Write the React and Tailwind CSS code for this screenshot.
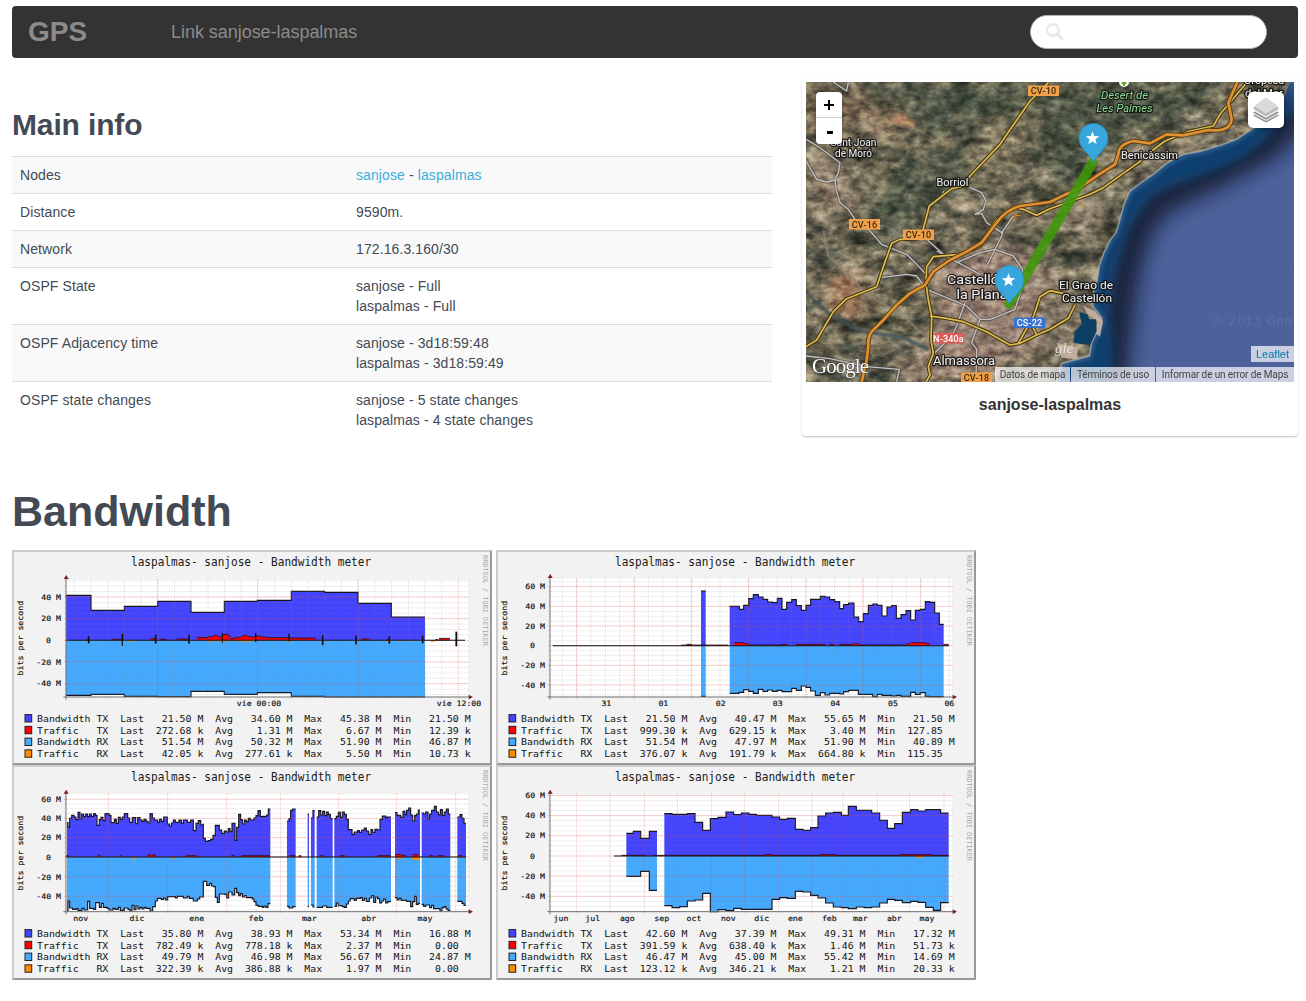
import React from "react";

const MONO = "font-['DejaVu_Sans_Mono',monospace]";

/* ---------- RRD charts: plot units are thirds of a pixel ---------- */

function stepPath(run) {
  const end = run[run.length - 1];
  let d = "";
  for (let i = 0; i < run.length - 1; i += 2) {
    const [x, y] = [run[i], run[i + 1]];
    const next = i + 2 < run.length - 1 ? run[i + 2] : end;
    d += (i === 0 ? "M" : "L") + x + " " + y + "H" + next;
  }
  return d;
}

function Area({ runs, zero, color, stroke = 3.4 }) {
  return runs.map((run, i) => {
    const line = stepPath(run);
    return (
      <g key={i}>
        <path d={`${line}V${zero}H${run[0]}Z`} fill={color} />
        <path d={line} fill="none" stroke="#15151f" strokeWidth={stroke} />
      </g>
    );
  });
}

const COLORS = ["#4444ff", "#ff0000", "#44aaff", "#ff8c00"];
const NAMES = ["Bandwidth TX", "Traffic   TX", "Bandwidth RX", "Traffic   RX"];

function legendLine(i, v) {
  const cell = (k, s) => {
    const [n, u = " "] = s.split(" ");
    return k + n.padStart(8) + " " + u;
  };
  return [
    NAMES[i],
    cell("Last", v[0]),
    cell("Avg", v[1]),
    cell("Max", v[2]),
    cell("Min", v[3]),
  ].join("  ");
}

function Chart({ c }) {
  const top = c.top;
  const bottom = c.bottom;
  const minorsY = [];
  for (let y = c.zero; y > top; y -= c.step / 4) minorsY.push(y);
  for (let y = c.zero + c.step / 4; y < bottom; y += c.step / 4) minorsY.push(y);
  const dy = c.dy;
  return (
    <div className="h-[215px] w-[480px] border-2 border-t-[#cccccc] border-l-[#cccccc] border-r-[#999999] border-b-[#999999] bg-[#f2f2f2]">
      <svg viewBox="2 2 476 211" className={`block h-[211px] w-[476px] ${MONO}`}>
        <g transform={`translate(-2 ${dy}) scale(0.33333)`}>
          <rect x="168" y={top} width="1206" height={bottom - top} fill="#fff" />
          <Area runs={c.tx} zero={c.zero} color="#4444ff" />
          <Area runs={c.rx} zero={c.zero} color="#44aaff" />
          <g stroke="#8a8a8a" strokeOpacity="0.28" strokeWidth="2.4" strokeDasharray="5 3">
            {minorsY.map((y) => (
              <path key={y} d={`M163 ${y}H1376`} />
            ))}
            {c.minorX.map((x) => (
              <path key={x} d={`M${x} ${top}V${bottom + 5}`} />
            ))}
          </g>
          <g stroke="#e04848" strokeOpacity="0.27" strokeWidth="3" strokeDasharray="4 2">
            {c.yl.map(([, y]) => (
              <path key={y} d={`M162 ${y}H1376`} />
            ))}
            {c.majorX.map((x) => (
              <path key={x} d={`M${x} ${top - 3}V${bottom + 7}`} />
            ))}
          </g>
          {c.traffic.map(([x, w, up, down], i) => (
            <g key={i}>
              {up > 0 && <rect x={x} y={c.zero - up} width={w} height={up} fill="#ff0000" />}
              {down > 0 && <rect x={x} y={c.zero} width={w} height={down} fill="#ff8c00" />}
              {up > 0 && <path d={`M${x} ${c.zero - up}h${w}`} stroke="#111" strokeWidth="2.2" />}
            </g>
          ))}
          {(c.ticks || []).map(([x, w, up, down]) => (
            <rect key={x} x={x - w / 2} y={c.zero - up} width={w} height={up + down} fill="#111" />
          ))}
          {c.base.map(([a, b], i) => (
            <path key={i} d={`M${a} ${c.zero}H${b}`} stroke="#111" strokeWidth="3.2" />
          ))}
          <path d={`M168 ${top - 8}V${bottom + 8}M160 ${bottom}H1382`} stroke="#707070" strokeWidth="3" />
          <path d={`M161 ${top - 2}L168.500 ${top - 14}L176 ${top - 2}Z`} fill="#801c1c" />
          <path d={`M1376 ${bottom - 7}L1389 ${bottom}L1376 ${bottom + 7}Z`} fill="#801c1c" />
        </g>
        <text transform="translate(119 16) scale(0.949 1)" fontSize="11.700" textLength="253" fill="#1a1a1a">
          laspalmas- sanjose - Bandwidth meter
        </text>
        <text transform="translate(11.200 125.500) rotate(-90) scale(1.1 1)" fontSize="7.500" textLength="68" fill="#111" stroke="#111" strokeWidth="0.150">
          bits per second
        </text>
        <text transform="translate(470.800 5) rotate(90)" fontSize="6.900" textLength="91" fill="#a8a8a8">
          RRDTOOL / TOBI OETIKER
        </text>
        <g fontSize="7.400" fill="#111" stroke="#111" strokeWidth="0.160">
          {c.yl.map(([t, y]) => (
            <text key={t} transform={`translate(${t === "0" ? 39 : 49} ${y / 3 + dy + 2.6}) scale(1.112 1)`} textAnchor="end">
              {t}
            </text>
          ))}
          {c.xl.map(([t, x]) => (
            <text key={t} transform={`translate(${x / 3 - 2} 156) scale(1.112 1)`} textAnchor="middle">
              {t}
            </text>
          ))}
        </g>
        {c.legend.map((v, i) => (
          <g key={i}>
            <rect x="13" y={164.600 + i * 11.750} width="6.700" height="7.400" fill={COLORS[i]} stroke="#222" strokeWidth="1" />
            <text transform={`translate(25 ${171.800 + i * 11.750}) scale(1.09 1)`} fontSize="9.060" fill="#111" style={{ whiteSpace: "pre" }}>
              {legendLine(i, v)}
            </text>
          </g>
        ))}
      </svg>
    </div>
  );
}

const range = (a, b, s) => {
  const r = [];
  for (let x = a; x <= b; x += s) r.push(x);
  return r;
};

const CHARTS = [
  {
    dy: -4, top: 101, bottom: 453, zero: 283, step: 65,
    yl: [["40 M", 153], ["20 M", 218], ["0", 283], ["-20 M", 348], ["-40 M", 413]],
    xl: [["vie 00:00", 747], ["vie 12:00", 1347]],
    majorX: [443, 743, 1044, 1345],
    minorX: range(193, 1300, 50.1),
    tx: [[168, 148, 243, 193, 343, 181, 443, 166, 543, 199, 643, 166, 742, 163, 844, 136, 944, 139, 1044, 172, 1144, 213, 1245]],
    rx: [[168, 448, 243, 445, 343, 451, 443, 452, 543, 436, 643, 445, 742, 440, 844, 451, 944, 453, 1245]],
    base: [[168, 1365]],
    traffic: [
      [230, 8, 2, 7], [334, 8, 17, 13], [360, 8, 0, 5], [305, 30, 3, 0], [422, 18, 5, 0], [450, 20, 3, 0], [500, 34, 4, 0],
      [561, 14, 9, 0], [575, 20, 8, 0], [595, 17, 11, 4], [612, 10, 15, 0], [622, 13, 11, 4], [635, 7, 17, 8], [642, 13, 18, 3],
      [655, 7, 13, 4], [662, 12, 6, 0], [674, 20, 9, 3], [694, 8, 13, 4], [702, 10, 15, 4], [712, 16, 11, 4], [728, 10, 10, 2],
      [738, 14, 13, 0], [752, 18, 10, 0], [770, 72, 8, 0], [842, 75, 7, 0], [830, 8, 0, 6], [1055, 22, 4, 0], [1130, 8, 2, 6],
      [1162, 12, 0, 3], [1198, 10, 0, 3], [1262, 12, 0, 4], [1275, 10, 2, 2], [1287, 33, 6, 0],
    ],
    ticks: [
      [236, 5, 13, 9], [337, 4, 18, 16], [437, 5, 17, 10], [537, 5, 17, 10], [637, 3, 22, 8], [737, 4, 22, 5], [837, 4, 20, 3],
      [938, 5, 15, 14], [1038, 5, 15, 12], [1138, 5, 13, 10], [1238, 5, 14, 9], [1339, 5.5, 26, 18],
    ],
    legend: [
      ["21.50 M", "34.60 M", "45.38 M", "21.50 M"],
      ["272.68 k", "1.31 M", "6.67 M", "12.39 k"],
      ["51.54 M", "50.32 M", "51.90 M", "46.87 M"],
      ["42.05 k", "277.61 k", "5.50 M", "10.73 k"],
    ],
  },
  {
    dy: -4, top: 98, bottom: 453, zero: 299, step: 59,
    yl: [["60 M", 122], ["40 M", 181], ["20 M", 240], ["0", 299], ["-20 M", 358], ["-40 M", 417]],
    xl: [["31", 337], ["01", 508], ["02", 680], ["03", 851], ["04", 1024], ["05", 1197], ["06", 1366]],
    majorX: [248, 421, 593, 764, 936, 1106, 1280],
    minorX: range(205, 1370, 43),
    tx: [
      [621, 135, 635],
      [707, 181, 736, 190, 749, 178, 764, 158, 778, 146, 793, 153, 807, 160, 821, 168, 835, 170, 850, 157, 864, 190, 878, 169, 893, 161, 907, 179, 922, 193, 936, 178, 950, 160, 979, 151, 993, 153, 1007, 161, 1022, 167, 1037, 188, 1049, 176, 1064, 171, 1080, 213, 1094, 227, 1108, 203, 1123, 178, 1137, 174, 1150, 178, 1164, 210, 1179, 183, 1193, 179, 1207, 217, 1221, 206, 1236, 194, 1250, 222, 1264, 193, 1279, 190, 1294, 167, 1307, 169, 1322, 201, 1336, 235, 1349],
    ],
    rx: [
      [621, 451, 635],
      [707, 442, 735, 439, 749, 431, 764, 436, 778, 442, 793, 430, 807, 436, 821, 432, 835, 436, 850, 433, 864, 437, 893, 427, 907, 433, 922, 420, 936, 424, 950, 435, 964, 448, 979, 440, 993, 447, 1007, 442, 1037, 444, 1049, 437, 1064, 433, 1093, 445, 1136, 452, 1150, 445, 1164, 448, 1193, 450, 1207, 448, 1221, 451, 1250, 439, 1264, 445, 1279, 440, 1294, 451, 1307, 452, 1349],
    ],
    base: [[176, 1365]],
    traffic: [
      [562, 140, 2, 0], [578, 15, 4, 0], [721, 27, 9, 0], [748, 16, 6, 0], [764, 98, 2, 0], [862, 18, 4, 0], [906, 88, 4, 0], [1006, 16, 4, 0],
      [1036, 42, 4, 0], [1078, 16, 6, 0], [1094, 142, 2, 0], [1236, 13, 5, 0], [1249, 46, 9, 0], [1295, 12, 6, 0], [1348, 16, 4, 0],
    ],
    legend: [
      ["21.50 M", "40.47 M", "55.65 M", "21.50 M"],
      ["999.30 k", "629.15 k", "3.40 M", "127.85"],
      ["51.54 M", "47.97 M", "51.90 M", "40.89 M"],
      ["376.07 k", "191.79 k", "664.80 k", "115.35"],
    ],
  },
  {
    dy: -1, top: 91, bottom: 443, zero: 279, step: 58,
    yl: [["60 M", 106], ["40 M", 164], ["20 M", 221], ["0", 279], ["-20 M", 339], ["-40 M", 397]],
    xl: [["nov", 212], ["dic", 381], ["ene", 560], ["feb", 738], ["mar", 898], ["abr", 1076], ["may", 1245]],
    majorX: [295, 473, 650, 811, 986, 1160, 1337],
    minorX: [],
    tx: [
      [171, 176, 174, 190, 179, 163, 185, 154, 192, 159, 198, 167, 204, 145, 210, 164, 215, 150, 221, 158, 227, 150, 233, 158, 239, 150, 244, 157, 251, 149, 256, 154, 261, 184, 268, 167, 273, 160, 279, 170, 285, 149, 297, 154, 303, 176, 313, 166, 319, 178, 325, 160, 331, 166, 337, 159, 343, 149, 353, 162, 359, 175, 367, 161, 377, 179, 383, 161, 390, 168, 396, 172, 402, 166, 408, 172, 414, 177, 420, 149, 427, 162, 433, 168, 443, 175, 449, 166, 455, 173, 461, 159, 472, 180, 478, 186, 484, 177, 490, 168, 496, 175, 507, 168, 514, 178, 520, 168, 532, 175, 542, 168, 550, 200, 558, 178, 565, 170, 572, 183, 578, 181, 580, 223, 586, 232, 594, 230, 602, 226, 609, 214, 616, 184, 628, 198, 635, 208, 643, 201, 649, 204, 655, 194, 660, 203, 666, 178, 675, 229, 680, 190, 686, 151, 692, 167, 697, 180, 703, 168, 709, 173, 715, 163, 721, 168, 732, 162, 738, 155, 744, 140, 751, 158, 757, 157, 770, 153, 775, 135, 781],
      [831, 171, 837, 164, 842, 139, 848, 135, 857],
      [893, 151, 897],
      [903, 162, 909, 140, 914],
      [920, 159, 926, 140, 932, 153, 938, 142, 944, 155, 950, 144, 955, 151, 961, 164, 968],
      [973, 164, 979, 157, 985, 145, 991, 160, 997, 144, 1003, 151, 1009, 166, 1015, 197, 1026, 211, 1033, 204, 1043, 200, 1048, 205, 1055, 198, 1063, 192, 1069, 201, 1076, 211, 1083, 197, 1088, 205, 1095, 196, 1103, 198, 1110, 166, 1117, 156, 1127, 163, 1131, 159, 1143],
      [1155, 146, 1161, 154, 1172, 160, 1179, 142, 1185, 152, 1190, 139, 1196, 132, 1202, 153, 1208, 171, 1214, 155, 1219, 150, 1225, 138, 1230],
      [1235, 147, 1241, 150, 1247, 144, 1254, 165, 1259, 150, 1265, 139, 1273, 127, 1279, 144, 1285, 152, 1291, 137, 1297, 154, 1303, 144, 1309, 135, 1315, 150, 1321],
      [1342, 159, 1350, 152, 1356, 163, 1362, 178, 1368],
    ],
    rx: [
      [171, 441, 174, 411, 179, 432, 188, 436, 198, 434, 204, 439, 216, 433, 222, 438, 233, 412, 239, 433, 251, 436, 257, 416, 268, 430, 274, 418, 280, 430, 291, 433, 297, 438, 309, 433, 315, 436, 325, 430, 331, 439, 343, 432, 354, 436, 360, 441, 366, 424, 372, 437, 378, 426, 384, 435, 390, 430, 396, 435, 402, 430, 408, 433, 420, 441, 428, 428, 436, 411, 442, 403, 454, 406, 461, 402, 467, 408, 473, 398, 496, 402, 502, 397, 520, 402, 532, 397, 538, 403, 550, 411, 562, 405, 569, 399, 580, 352, 590, 364, 599, 358, 605, 366, 611, 368, 616, 400, 622, 415, 628, 390, 645, 391, 650, 402, 656, 384, 666, 393, 674, 373, 680, 386, 686, 395, 691, 389, 697, 399, 703, 395, 709, 401, 727, 405, 732, 413, 738, 424, 745, 427, 757, 430, 762, 426, 768, 430, 774, 419, 781],
      [831, 427, 837, 432, 848, 428, 857],
      [893, 428, 897],
      [903, 423, 909, 429, 914],
      [920, 430, 938, 426, 950, 430, 968],
      [973, 427, 979, 417, 985, 425, 997, 428, 1003, 430, 1009, 420, 1015, 411, 1021, 404, 1033, 409, 1039, 403, 1051, 401, 1057, 409, 1063, 403, 1069, 412, 1078, 402, 1085, 395, 1091, 415, 1097, 399, 1103, 404, 1109, 417, 1115, 411, 1121, 405, 1127, 417, 1133, 413, 1143],
      [1155, 401, 1161, 408, 1167, 403, 1173, 409, 1190, 412, 1202, 428, 1208, 413, 1214, 397, 1219, 421, 1225, 418, 1230],
      [1235, 421, 1241, 427, 1247, 423, 1259, 431, 1265, 424, 1271, 434, 1290, 441, 1296, 431, 1302, 428, 1308, 435, 1314, 439, 1321],
      [1342, 412, 1356, 418, 1362, 424, 1368],
    ],
    base: [[168, 1368]],
    traffic: [
      [168, 8, 4, 0], [264, 8, 4, 0], [330, 5, 4, 0],
      [368, 10, 0, 7], [412, 12, 6, 0], [426, 12, 6, 0], [485, 9, 0, 5], [528, 32, 4, 0], [664, 10, 4, 0], [694, 86, 4, 0], [990, 14, 4, 0],
      [838, 18, 4, 0], [866, 8, 4, 0], [930, 10, 4, 0],
      [1102, 40, 4, 0], [1155, 18, 7, 0], [1161, 12, 0, 6], [1175, 12, 5, 0], [1208, 18, 7, 0], [1206, 8, 0, 5], [1212, 15, 0, 9], [1258, 12, 4, 0], [1282, 20, 4, 0], [1345, 12, 4, 0],
    ],
    legend: [
      ["35.80 M", "38.93 M", "53.34 M", "16.88 M"],
      ["782.49 k", "778.18 k", "2.37 M", "0.00"],
      ["49.79 M", "46.98 M", "56.67 M", "24.87 M"],
      ["322.39 k", "386.88 k", "1.97 M", "0.00"],
    ],
  },
  {
    dy: -1, top: 91, bottom: 443, zero: 276, step: 60.5,
    yl: [["60 M", 94], ["40 M", 155], ["20 M", 215], ["0", 276], ["-20 M", 336], ["-40 M", 397]],
    xl: [["jun", 201], ["jul", 296], ["ago", 400], ["sep", 503], ["oct", 600], ["nov", 703], ["dic", 803], ["ene", 904], ["feb", 1006], ["mar", 1099], ["abr", 1201], ["may", 1299]],
    majorX: [248, 348, 451, 550, 653, 752, 854, 954, 1047, 1150, 1247, 1350],
    minorX: [],
    tx: [
      [397, 208, 418, 202, 440, 223, 466, 202, 489],
      [511, 149, 534, 151, 580, 149, 603, 175, 626, 199, 649, 164, 672, 160, 696, 144, 719, 152, 742, 147, 765, 151, 787, 154, 834, 159, 857, 166, 880, 163, 904, 196, 927, 199, 950, 191, 972, 156, 995, 147, 1018, 145, 1042, 154, 1063, 127, 1087, 139, 1133, 147, 1157, 169, 1180, 193, 1202, 179, 1225, 145, 1250, 137, 1272, 141, 1295, 137, 1340, 147, 1364],
    ],
    rx: [
      [397, 337, 440, 322, 466, 379, 489],
      [511, 425, 534, 431, 557, 428, 580, 411, 603, 408, 626, 388, 649, 443, 672, 437, 696, 440, 719, 433, 742, 436, 834, 406, 857, 401, 880, 403, 904, 382, 927, 384, 950, 394, 972, 402, 995, 417, 1018, 429, 1042, 431, 1063, 434, 1087, 429, 1110, 431, 1133, 429, 1157, 417, 1180, 406, 1202, 409, 1225, 416, 1250, 412, 1272, 415, 1295, 430, 1318, 439, 1340, 416, 1364],
    ],
    base: [[360, 1364]],
    traffic: [[382, 75, 2, 0], [478, 886, 2, 0], [813, 24, 4, 0], [978, 48, 4, 0], [1218, 96, 4, 0], [1266, 23, 0, 5]],
    legend: [
      ["42.60 M", "37.39 M", "49.31 M", "17.32 M"],
      ["391.59 k", "638.40 k", "1.46 M", "51.73 k"],
      ["46.47 M", "45.00 M", "55.42 M", "14.69 M"],
      ["123.12 k", "346.21 k", "1.21 M", "20.33 k"],
    ],
  },
];

/* ---------- Map ---------- */

const COAST = "M1440 98L1395 135L1340 170L1310 190L1262 208L1200 226L1150 235L1100 262L1060 295L1020 322L990 345L972 385L960 430L948 470L932 490L912 530L898 568L892 610L880 650L878 690L905 725L905 745L890 770L875 800L868 840L830 850L785 862L770 918";
const SHELF = "L925 918L940 860L935 790L925 720L930 640L945 570L972 490L1000 430L1050 355L1120 325L1210 295L1320 250L1385 200L1440 130L1482 100V18H1470Z";
const ROADS = {
  grey: [
    "M100 18L140 45L145 18", "M18 190L60 215L120 260L115 290L105 310L108 340L120 380L145 400L165 430L210 465L225 482L245 505L320 535L345 560L378 595",
    "M18 255L35 285L50 310L80 318L105 312", "M432 345L425 360", "M510 335L545 350L558 375L550 400L525 415L545 412L560 440L605 470L640 420",
    "M610 462L605 480L560 570", "M410 525L540 595", "M470 560L540 530L585 520L640 540L668 580L665 640L645 700L570 730L540 730L500 690L380 640L350 600L320 595L240 605",
    "M495 680L470 750L455 780L395 840", "M540 730L515 800L530 820L528 905", "M18 840L90 848L200 872L298 880L290 918", "M380 490L430 535",
  ],
  yellow: [
    "M745 20L690 75L600 205L510 300L490 330L455 338L388 390L368 465L355 488L300 490L275 502L250 572L230 632L140 668L100 707L50 792L18 812",
    "M1340 20L1260 115L1240 150L1170 165L1095 195L1055 225L1015 260L910 335L870 355L750 398L710 418L670 400L640 395L590 430L555 480L540 510L480 535L400 542L380 572L378 622L385 672L395 722L393 792L400 832L385 872L390 897L378 918",
    "M390 720L440 727L490 737L560 767L630 807L660 802L710 777L750 760L805 727L825 687", "M655 802L700 722L720 662L750 644L790 652", "M695 747L710 777",
  ],
  orange: [
    "M1312 18L1285 80L1295 130Q1290 170 1225 162L1150 178L1100 175L1050 202L1000 195Q955 205 955 235L945 265L890 300L840 335L750 378L660 390Q620 400 590 440L545 500L500 527L450 552L400 587L375 627L330 652L290 687L250 732L215 767Q202 785 205 810L200 852L185 918",
  ],
};

function Road({ list, color, width, casing }) {
  return (
    <g fill="none" strokeLinejoin="round">
      {list.map((d) => (
        <path key={d + "c"} d={d} stroke={casing} strokeWidth={width + 6} />
      ))}
      {list.map((d) => (
        <path key={d} d={d} stroke={color} strokeWidth={width} />
      ))}
    </g>
  );
}

function Shield({ x, y, w, t, fill = "#f0a04b", color = "#3a2a10" }) {
  return (
    <g>
      <rect x={x} y={y} width={w} height="10.500" fill={fill} />
      <text x={x + w / 2} y={y + 8.600} textAnchor="middle" fontSize="9" fontWeight="500" letterSpacing="0.200" fill={color}>
        {t}
      </text>
    </g>
  );
}

function Place({ x, y, s, t, fill = "#f2f2f2", italic, w }) {
  return (
    <text x={x} y={y} textAnchor="middle" fontSize={s} fontStyle={italic ? "italic" : "normal"} fill={fill} stroke="#111" strokeOpacity="0.850" strokeWidth="2.600" strokeLinejoin="round" paintOrder="stroke" textLength={w} lengthAdjust="spacingAndGlyphs">
      {t}
    </text>
  );
}

function Pin({ x, y }) {
  return (
    <g transform={`translate(${x} ${y})`}>
      <path d="M0 0C-3.500 -8 -14.500 -13.500 -14.500 -24A14.500 14.500 0 0 1 14.500 -24C14.500 -13.500 3.500 -8 0 0Z" fill="#36a6dc" stroke="#2b8dc0" strokeWidth="0.700" />
      <path d="M-1 -30.800L0.800 -26L5.800 -25.800L1.900 -22.700L3.200 -17.900L-1 -20.600L-5.200 -17.900L-3.900 -22.700L-7.800 -25.800L-2.800 -26Z" fill="#fff" />
    </g>
  );
}

function TerrainMap() {
  return (
    <svg viewBox="0 0 488 300" className="block h-[300px] w-[488px] font-['Roboto',sans-serif]">
      <defs>
        <filter id="terrain" x="0" y="0" width="100%" height="100%" colorInterpolationFilters="sRGB">
          <feTurbulence type="fractalNoise" baseFrequency="0.035 0.06" numOctaves="6" seed="21" />
          <feColorMatrix values="0.8 0.35 0 0 -0.16  0.68 0.35 0 0 -0.11  0.56 0.32 0 0 -0.1  0 0 0 0 1" />
        </filter>
        <filter id="grain" x="0" y="0" width="100%" height="100%" colorInterpolationFilters="sRGB">
          <feTurbulence type="fractalNoise" baseFrequency="0.11 0.16" numOctaves="4" seed="5" />
          <feColorMatrix values="1.3 0.4 0 0 -0.32  1.2 0.45 0 0 -0.32  1.1 0.5 0 0 -0.32  0 0 0 0 1" />
        </filter>
        <filter id="soft" x="-30%" y="-30%" width="160%" height="160%">
          <feGaussianBlur stdDeviation="30" />
        </filter>
        <filter id="edge" x="-8%" y="-8%" width="116%" height="116%">
          <feGaussianBlur stdDeviation="6" />
        </filter>
        <filter id="haze" x="-10%" y="-10%" width="120%" height="120%">
          <feGaussianBlur stdDeviation="13" />
        </filter>
        <clipPath id="sea">
          <path d={COAST + "H1482V18H1470Z"} />
        </clipPath>
      </defs>
      <rect width="488" height="300" filter="url(#terrain)" />
      <g transform="translate(-6 -6) scale(0.33333)">
        <g filter="url(#soft)">
          <path d="M170 18H1250L1200 110L1000 150L860 250L780 330L700 240L720 120L500 150L420 180L200 100Z" fill="#34493c" opacity="0.550" />
          <path d="M230 310L500 210L560 320L380 370L340 480L180 430Z" fill="#3a4f3f" opacity="0.450" />
          <path d="M18 40L180 60L330 120L300 170L140 160L18 180Z" fill="#93765c" opacity="0.500" />
          <path d="M600 130L720 120L600 320L480 300Z" fill="#8b8266" opacity="0.550" />
          <path d="M18 260L140 270L160 380L60 400Z" fill="#a88f7c" opacity="0.650" />
          <path d="M90 600L200 580L190 720L80 710Z" fill="#b48c72" opacity="0.600" />
          <path d="M380 560L640 500L760 620L720 800L560 900L300 918L420 720Z" fill="#a78b80" opacity="0.650" />
          <path d="M940 340L1300 170L1400 90L1380 60L1200 180L960 270L820 420L880 520Z" fill="#a69684" opacity="0.650" />
          <path d="M680 640L860 560L870 800L740 900L690 840Z" fill="#8f8272" opacity="0.500" />
        </g>
        <path d="M270 135L300 108L350 150L340 155Z" fill="#c98f6c" opacity="0.800" filter="url(#edge)" />
        <path d="M95 610L150 595L185 650L165 735L80 690Z" fill="#b5805f" opacity="0.400" filter="url(#edge)" />
        <path d="M450 385L490 378L520 400L480 408Z" fill="#cdb59c" opacity="0.800" filter="url(#edge)" />
        <path d="M20 275L40 280L60 305L30 300ZM70 320L140 325L145 340L80 335Z" fill="#d8c4b0" opacity="0.800" filter="url(#edge)" />
      </g>
      <rect width="488" height="300" filter="url(#grain)" className="mix-blend-overlay" opacity="0.450" />
      <g transform="translate(-6 -6) scale(0.33333)">
        <path d="M70 462L85 540L170 620L190 650L310 720L395 800" fill="none" stroke="#948a7b" strokeWidth="7" opacity="0.650" />
        <path d="M18 650L90 715L180 765L310 785L385 820" fill="none" stroke="#42545a" strokeWidth="11" opacity="0.750" />
        <g clipPath="url(#sea)">
          <rect x="700" y="0" width="800" height="930" fill="#4d629b" />
          <path d="M1500 90L1400 205L1220 300L1080 365L1010 450L970 590L955 700L930 920" fill="none" stroke="#10182a" strokeWidth="95" opacity="0.850" filter="url(#soft)" />
          <path d={COAST + SHELF} fill="#0e4170" filter="url(#haze)" />
          <path d={COAST} fill="none" stroke="#2a6c98" strokeWidth="18" opacity="0.600" filter="url(#edge)" />
        </g>
        <path d={COAST} fill="none" stroke="#cfc4b4" strokeWidth="5" opacity="0.550" />
        <path d="M850 690L885 705L909 735L900 782L885 770L892 735L860 712ZM770 800L835 815L830 850L785 845Z" fill="#c9b3a5" opacity="0.900" />
        <path d="M838 708L862 715L868 730L888 730L890 765L870 808L820 800L825 765L845 745Z" fill="#0d3f63" />
      </g>
      <g transform="translate(-6 -6) scale(0.33333)">
        <Road list={ROADS.grey} color="#c4c2c0" width={4} casing="#43434399" />
        <Road list={ROADS.yellow} color="#e0bd50" width={5} casing="#3d3312" />
        <Road list={ROADS.orange} color="#de9233" width={8} casing="#5a3c12" />
        <path d="M632 408L650 418L662 418M645 418L640 438" fill="none" stroke="#c98222" strokeWidth="4" />
      </g>
      <Shield x={222} y={3.500} w={31} t="CV-10" />
      <Shield x={43} y={137} w={31} t="CV-16" />
      <Shield x={97} y={147.500} w={31} t="CV-10" />
      <Shield x={155} y={290.500} w={31} t="CV-18" />
      <Shield x={127} y={251} w={31} t="N-340a" fill="#de5b5b" color="#fff" />
      <Shield x={208} y={235.500} w={31} t="CS-22" fill="#3573cf" color="#fff" />
      <circle cx="318" cy="0" r="5" fill="#fff" />
      <path d="M318 -3L321 2H319V4H317V2H315Z" fill="#61a81e" />
      <g>
        <Place x={318.500} y={17} s={11} t="Desert de" fill="#8fdc93" italic w={47} />
        <Place x={318.500} y={29.500} s={11} t="Les Palmes" fill="#8fdc93" italic w={56} />
        <Place x={47.500} y={64} s={10.500} t="Sant Joan" w={46} />
        <Place x={47.500} y={74.500} s={10.500} t="de Moró" w={37} />
        <Place x={146.500} y={104} s={11} t="Borriol" w={32} />
        <Place x={343.500} y={77} s={11} t="Benicàssim" w={57} />
        <Place x={458} y={1.500} s={10.500} t="Oropesa" w={40} />
        <Place x={458} y={15} s={10.500} t="del Mar" w={38} />
        <Place x={167} y={202} s={13.500} t="Castelló" w={52} />
        <Place x={176} y={217} s={13.500} t="la Plana" w={51} />
        <Place x={280} y={207} s={11.500} t="El Grao de" w={54} />
        <Place x={281} y={220} s={11.500} t="Castellón" w={50} />
        <Place x={158} y={282.500} s={13} t="Almassora" w={62} />
      </g>
      <text x="406" y="243" fontSize="12" textLength="88" className="font-['DejaVu_Sans',sans-serif]" fill="#6077ad" fillOpacity="0.700">
        © 2013 Goog
      </text>
      <text x="249" y="271" fontSize="15" fontStyle="italic" fill="#fff" fillOpacity="0.650" className="font-['Liberation_Serif',serif]">
        gle
      </text>
      <text x="6" y="291" fontSize="21" textLength="57" className="font-['Liberation_Serif',serif]" fill="#fff" stroke="#333" strokeWidth="0.800" paintOrder="stroke">
        Google
      </text>
      <path d="M287 80L203 222" stroke="#3f9a08" strokeOpacity="0.860" strokeWidth="9.500" strokeLinecap="round" />
      <Pin x={287.500} y={80} />
      <Pin x={203.500} y={222} />
    </svg>
  );
}

function LayersIcon() {
  return (
    <svg viewBox="0 0 26 26" className="h-[26px] w-[26px]">
      <path d="M13 11L26 18.500L13 25.500L0 18.500Z" fill="#8c8c8c" />
      <path d="M13 9.500L26 17L13 24L0 17Z" fill="#e8e8e8" />
      <path d="M13 8.500L26 15.500L13 22.800L0 15.500Z" fill="#8f8f8f" />
      <path d="M13 6.500L26 13.700L13 21L0 13.700Z" fill="#e8e8e8" />
      <path d="M13 1L26 11.500L13 19.300L0 11.500Z" fill="#b8b8b8" />
      <path d="M13 0.500L25 9L13 16.800L1 9Z" fill="#dadada" />
    </svg>
  );
}

function MapCard() {
  return (
    <div className="h-[358px] w-[496px] rounded bg-white p-1 shadow-[0_1px_2px_rgba(0,0,0,0.25)]">
      <div className="relative h-[300px] w-[488px] overflow-hidden">
        <TerrainMap />
        <div className="absolute top-[10px] left-[10px] w-[26px] rounded bg-white shadow-[0_1px_4px_rgba(0,0,0,0.4)]">
          <div className="flex h-[26px] items-center justify-center border-b border-[#ccc]">
            <svg viewBox="0 0 10 10" className="h-[10px] w-[10px]"><path d="M5 0V10M0 5H10" stroke="#000" strokeWidth="2" /></svg>
          </div>
          <div className="flex h-[26px] items-center justify-center pt-[3px] pl-[2px]">
            <svg viewBox="0 0 6 3" className="h-[3px] w-[6px]"><path d="M0 0H6V3H0Z" /></svg>
          </div>
        </div>
        <div className="absolute top-[10px] right-[10px] flex h-9 w-9 items-center justify-center rounded-[5px] bg-white shadow-[0_1px_5px_rgba(0,0,0,0.4)]">
          <LayersIcon />
        </div>
        <div className="absolute right-0 bottom-5 h-4 w-[43px] bg-white/70 pl-[5px] text-[11px] leading-4 text-[#0078A8]">Leaflet</div>
        <div className="absolute right-0 bottom-0 flex h-[15px] gap-px font-['Roboto',sans-serif] text-[10px] leading-[15px] tracking-[-0.12px] whitespace-nowrap text-[#444]">
          <span className="w-[75px] bg-white/70 text-center">Datos de mapa</span>
          <span className="w-[84px] bg-white/70 text-center">Términos de uso</span>
          <span className="w-[138px] bg-white/70 text-center">Informar de un error de Maps</span>
        </div>
      </div>
      <h3 className="mt-[11px] text-center text-base leading-6 font-bold text-[#333]">sanjose-laspalmas</h3>
    </div>
  );
}

/* ---------- Page ---------- */

const link = (t) => <a className="text-[#3bafda]">{t}</a>;

const ROWS = [
  ["Nodes", <>{link("sanjose")} - {link("laspalmas")}</>],
  ["Distance", "9590m."],
  ["Network", "172.16.3.160/30"],
  ["OSPF State", <>sanjose - Full<br />laspalmas - Full</>],
  ["OSPF Adjacency time", <>sanjose - 3d18:59:48<br />laspalmas - 3d18:59:49</>],
  ["OSPF state changes", <>sanjose - 5 state changes<br />laspalmas - 4 state changes</>],
];

export default function App() {
  return (
    <div className="h-[1001px] w-[1306px] overflow-hidden bg-white pt-[6px] pr-2 pl-3 font-['Liberation_Sans',Arial,sans-serif] text-[14px] leading-5 text-[#434a54]">
      <nav className="flex h-[52px] items-center rounded bg-[#333] pr-[31px] pl-4 text-[#8b8b8b]">
        <span className="w-[143px] text-[28px] font-bold">GPS</span>
        <span className="flex-1 text-lg tracking-[-0.04px]">Link sanjose-laspalmas</span>
        <div className="flex h-[34px] w-[237px] items-center rounded-full border border-[#aab2bd] bg-white pl-[15px]">
          <svg viewBox="0 0 18 18" className="h-[18px] w-[18px]" fill="none" stroke="#e6e9ed">
            <circle cx="7" cy="7" r="5.800" strokeWidth="2.400" />
            <path d="M11.300 11.300L15.600 15.600" strokeWidth="3.600" strokeLinecap="round" />
          </svg>
        </div>
      </nav>

      <div className="mt-5 flex justify-between">
        <section className="w-[760px] pt-[30px]">
          <h2 className="text-[30px] leading-[33px] font-bold tracking-[-0.14px]">Main info</h2>
          <table className="mt-[15px] w-full table-fixed border-collapse tracking-[0.1px]">
            <tbody>
              {ROWS.map(([k, v]) => (
                <tr key={k} className="border-t border-[#ddd] align-top odd:bg-[#f9f9f9]">
                  <td className="w-[336px] p-2">{k}</td>
                  <td className="p-2">{v}</td>
                </tr>
              ))}
            </tbody>
          </table>
        </section>
        <MapCard />
      </div>

      <h1 className="mt-[50px] text-[43px] leading-[47px] font-bold">Bandwidth</h1>
      <div className="mt-[15px] grid w-max grid-cols-2 gap-x-1">
        {CHARTS.map((c, i) => (
          <Chart key={i} c={c} />
        ))}
      </div>
    </div>
  );
}
